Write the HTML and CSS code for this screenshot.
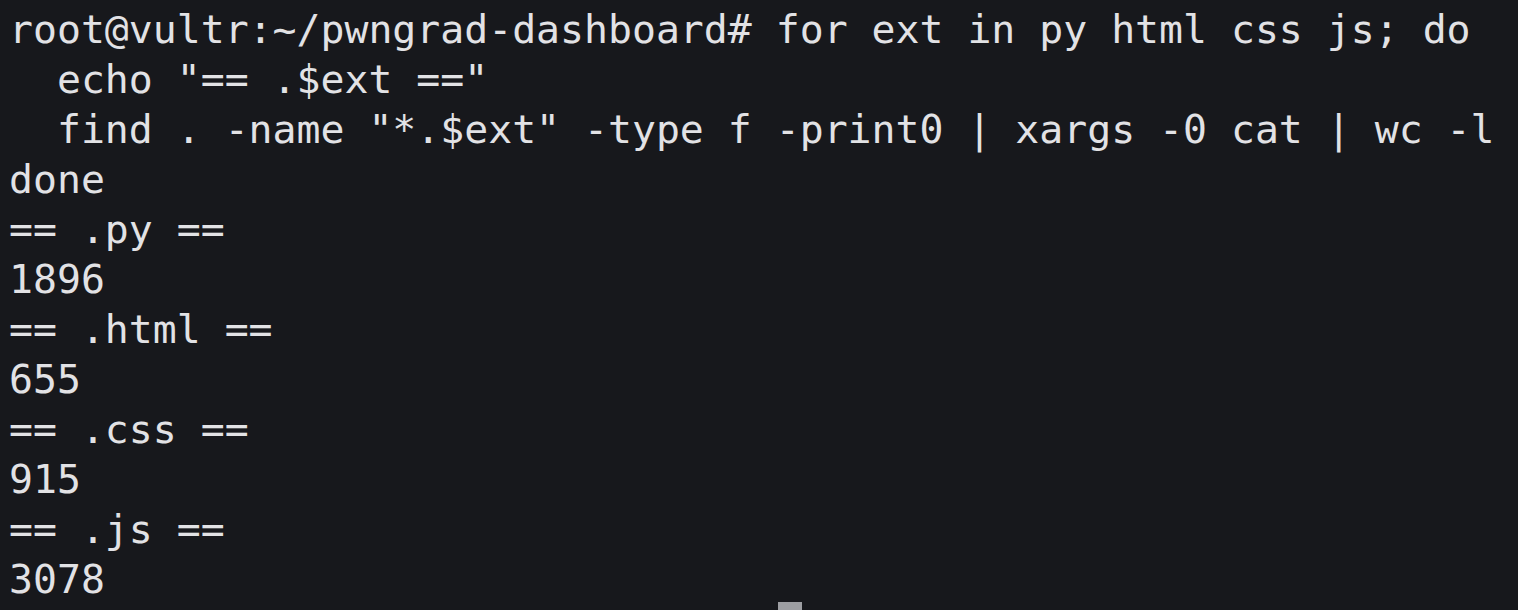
FILE: index.html
```html
<!DOCTYPE html>
<html>
<head>
<meta charset="utf-8">
<link rel="stylesheet" href="styles.css">
</head>
<body>
<main class="term">
<div class="line">root@vultr:~/pwngrad-dashboard# for ext in py html css js; do</div>
<div class="line">  echo "== .$ext =="</div>
<div class="line">  find . -name "*.$ext" -type f -print0 | xargs -0 cat | wc -l</div>
<div class="line">done</div>
<div class="line">== .py ==</div>
<div class="line">1896</div>
<div class="line">== .html ==</div>
<div class="line">655</div>
<div class="line">== .css ==</div>
<div class="line">915</div>
<div class="line">== .js ==</div>
<div class="line">3078</div>
<div class="cursor"></div>
</main>
</body>
</html>
```
FILE: styles.css
```css
html, body {
  margin: 0;
  padding: 0;
  background: #17181c;
  height: 100%;
  overflow: hidden;
}
.term {
  padding: 4px 0 0 9px;
  font-family: "DejaVu Sans Mono", "Liberation Mono", monospace;
  font-size: 39.8px;
  line-height: 50px;
  color: #e2e2e5;
}
.line {
  white-space: pre;
  height: 50px;
}
.cursor {
  margin-top: -2px;
  margin-left: 769px;
  width: 24px;
  height: 8px;
  background: #9d9ea2;
}
```
